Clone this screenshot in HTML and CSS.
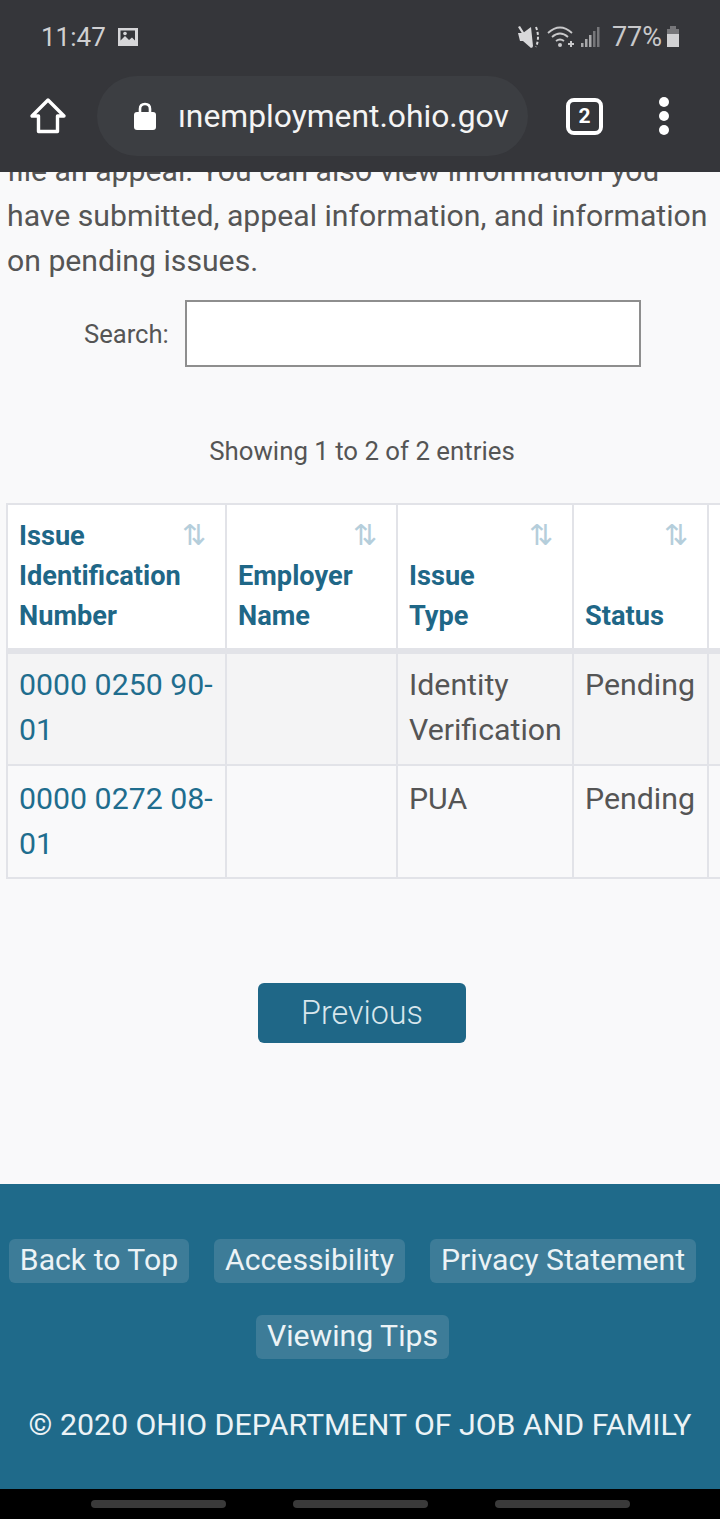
FILE: index.html
```html
<!DOCTYPE html>
<html lang="en">
<head>
    <meta charset="UTF-8">
    <title>Issues</title>
    <link rel="stylesheet" href="styles.css">
</head>
<body>
    <div class="chrome">
        <div class="status">
            <div class="status-left">
                <span class="time">11:47</span>
                <svg width="22" height="20" viewBox="0 0 22 20"><path fill="#d6d6d8" fill-rule="evenodd" d="M1 1h20v18H1zM3.500 3.500v10l4.500-4.500 4 4 3-2.500 3 3V3.500z"/><circle cx="8" cy="6.500" r="1.800" fill="#d6d6d8"/></svg>
            </div>
            <div class="status-right">
                <svg width="24" height="24" viewBox="0 0 24 24"><path fill="#d8d8da" d="M1 8h5l8-6 2 19-2 2-8-7H3zM1 2l2-1 13 21-2 1z"/><path fill="none" stroke="#d8d8da" stroke-width="2" stroke-dasharray="3 2" d="M19 2q4 10 0 20"/></svg>
                <svg class="wifi" width="30" height="26" viewBox="0 0 30 26"><g fill="none" stroke="#c8c8ca" stroke-width="1.800"><path d="M1 9q12-11 24 0"/><path d="M5 13q8-7 16 0"/><path d="M9 17q4-3 8 0"/></g><circle cx="13" cy="21" r="2" fill="#c8c8ca"/><path fill="#c8c8ca" d="M21 19h2v-2l2 0v2h2v2h-2v2h-2v-2h-2z"/></svg>
                <svg class="signal" width="20" height="22" viewBox="0 0 20 22"><path fill="#a8a8aa" d="M1 17h2.500v4H1zM5 13h2.500v8H5zM9 9h2.500v12H9z"/><path fill="#77777a" d="M13 5h2.500v16H13zM17 1h2.500v20H17z"/></svg>
                <span class="battery-text">77%</span>
                <svg width="16" height="24" viewBox="0 0 16 24"><path fill="#77777a" d="M5 1h6v3h3v6H2V4h3z"/><path fill="#d2d2d4" d="M2 9h12v13H2z"/></svg>
            </div>
        </div>
        <div class="toolbar">
            <svg class="home" width="38" height="38" viewBox="0 0 38 38"><path fill="none" stroke="#fff" stroke-width="3.400" stroke-linejoin="round" d="M19 3 3 19h6.500v15.500h19V19H35z"/></svg>
            <div class="omnibox">
                <svg width="24" height="30" viewBox="0 0 24 30"><path fill="none" stroke="#fff" stroke-width="2.600" d="M7 13V8q0-5 5-5t5 5v5"/><rect x="1" y="11" width="22" height="18" rx="3" fill="#fff"/></svg>
                <span class="url">ınemployment.ohio.gov</span>
            </div>
            <div class="tabs">2</div>
            <div class="dots"><i></i><i></i><i></i></div>
        </div>
    </div>

    <div class="main">
        <p class="intro">file an appeal. You can also view information you have submitted, appeal information, and information on pending issues.</p>
        <div class="search">
            <label for="q">Search:</label>
            <input id="q" type="text">
        </div>
        <div class="info">Showing 1 to 2 of 2 entries</div>
        <div class="table-wrap">
            <table>
                <thead>
                    <tr>
                        <th class="c1">Issue Identification Number<span class="sort">⇅</span></th>
                        <th class="c2">Employer Name<span class="sort">⇅</span></th>
                        <th class="c3">Issue<br>Type<span class="sort">⇅</span></th>
                        <th class="c4">Status<span class="sort">⇅</span></th>
                        <th class="c5"></th>
                    </tr>
                </thead>
                <tbody>
                    <tr class="odd">
                        <td><a href="#">0000 0250 90-01</a></td>
                        <td></td>
                        <td>Identity Verification</td>
                        <td>Pending</td>
                        <td></td>
                    </tr>
                    <tr class="even">
                        <td><a href="#">0000 0272 08-01</a></td>
                        <td></td>
                        <td>PUA</td>
                        <td>Pending</td>
                        <td></td>
                    </tr>
                </tbody>
            </table>
        </div>
        <div class="actions">
            <a class="btn" href="#">Previous</a>
        </div>
    </div>

    <div class="footer">
        <div class="footer-links">
            <a href="#">Back to Top</a>
            <a href="#">Accessibility</a>
            <a href="#">Privacy Statement</a>
            <a href="#">Viewing Tips</a>
        </div>
        <div class="copy">© 2020 OHIO DEPARTMENT OF JOB AND FAMILY</div>
    </div>

    <div class="navbar"><i></i><i></i><i></i></div>
</body>
</html>
```

FILE: styles.css
```css
* {
    padding: 0;
    margin: 0;
    box-sizing: border-box;
}
body {
    width: 720px;
    height: 1519px;
    overflow: hidden;
    display: flex;
    flex-direction: column;
    background-color: #f9f9fa;
    font-family: Roboto, sans-serif;
    color: #555;
}
.chrome {
    height: 172px;
    flex: none;
    background-color: #35363a;
    position: relative;
    z-index: 2;
}
.status {
    height: 76px;
    padding: 20px 39px 0 41px;
    display: flex;
    justify-content: space-between;
    align-items: flex-start;
}
.status-left {
    display: flex;
    align-items: center;
    gap: 11px;
}
.time {
    font-size: 26px;
    line-height: 34px;
    color: #d0d0d2;
}
.status-right {
    display: flex;
    align-items: center;
    height: 34px;
    gap: 3px;
}
.wifi {
    margin-left: 3px;
}
.battery-text {
    font-size: 27px;
    color: #c8c8ca;
    margin-left: 9px;
}
.toolbar {
    height: 80px;
    display: flex;
    align-items: center;
    padding-left: 29px;
}
.home {
    flex: none;
}
.omnibox {
    width: 431px;
    height: 80px;
    margin-left: 30px;
    border-radius: 40px;
    background-color: #3c3e42;
    display: flex;
    align-items: center;
    padding-left: 36px;
}
.url {
    font-size: 31.800px;
    color: #f4f4f4;
    margin-left: 21px;
    white-space: nowrap;
}
.tabs {
    width: 37px;
    height: 37px;
    margin-left: 38px;
    border: 4px solid #fff;
    border-radius: 8px;
    color: #fff;
    font-size: 21px;
    font-weight: 700;
    line-height: 29px;
    text-align: center;
}
.dots {
    margin-left: 56px;
    display: flex;
    flex-direction: column;
    gap: 4px;
}
.dots i {
    width: 10px;
    height: 10px;
    border-radius: 50%;
    background-color: #fff;
}
.main {
    flex: 1;
    overflow: hidden;
}
.intro {
    margin-top: -24px;
    padding: 0 7px;
    font-size: 30.200px;
    line-height: 45px;
    color: #555;
}
.search {
    margin-top: 17px;
    padding-left: 84px;
    display: flex;
    align-items: center;
    gap: 16px;
}
.search label {
    font-size: 25.600px;
    color: #555;
}
.search input {
    width: 456px;
    height: 67px;
    border: 2px solid #8e8e8e;
    background-color: #fff;
}
.info {
    margin-top: 66px;
    padding-left: 4px;
    text-align: center;
    font-size: 25.800px;
    line-height: 36px;
}
.table-wrap {
    margin-top: 34px;
    padding-left: 6px;
    overflow: hidden;
}
table {
    width: 760px;
    table-layout: fixed;
    border-collapse: collapse;
}
th, td {
    border: 2px solid #e2e3e8;
    padding: 0 11px;
    text-align: left;
    vertical-align: top;
}
th {
    position: relative;
    height: 147px;
    vertical-align: bottom;
    padding-bottom: 12px;
    background-color: #fff;
    border-bottom-width: 6px;
    color: #1f6787;
    font-size: 27.200px;
    line-height: 40px;
    font-weight: 700;
}
td {
    height: 113px;
    padding-top: 8px;
    font-size: 30.300px;
    line-height: 45px;
}
.odd td {
    height: 114px;
    background-color: #f4f4f5;
}
.even td {
    padding-top: 10px;
}
td a {
    color: #1f6d8e;
    text-decoration: none;
}
.c1 { width: 219px; }
.c2 { width: 171px; }
.c3 { width: 176px; }
.c4 { width: 135px; }
.sort {
    position: absolute;
    top: 10px;
    right: 19px;
    font-size: 29px;
    line-height: 40px;
    font-weight: 400;
    color: #b5cedb;
}
.actions {
    margin-top: 104px;
    display: flex;
    justify-content: center;
    padding-left: 4px;
}
.btn {
    width: 208px;
    height: 60px;
    border-radius: 6px;
    background-color: #1f6787;
    color: #d8e6ec;
    font-size: 32.300px;
    font-weight: 300;
    line-height: 60px;
    text-align: center;
    text-decoration: none;
}
.footer {
    height: 305px;
    flex: none;
    background-color: #1f6a8a;
    padding-top: 55px;
}
.footer-links {
    display: flex;
    flex-wrap: wrap;
    justify-content: center;
    gap: 32px 25px;
    padding-right: 15px;
}
.footer-links a {
    height: 44px;
    padding: 0 11px;
    border-radius: 6px;
    background-color: #3d7c98;
    color: #ecf3f6;
    font-size: 30.200px;
    line-height: 42px;
    text-decoration: none;
    white-space: nowrap;
}
.copy {
    margin-top: 46px;
    text-align: center;
    font-size: 30.300px;
    line-height: 40px;
    color: #ecf3f6;
    white-space: nowrap;
}
.navbar {
    height: 30px;
    flex: none;
    background-color: #000;
    display: flex;
    justify-content: center;
    gap: 67px;
    padding-top: 11px;
}
.navbar i {
    width: 135px;
    height: 8px;
    border-radius: 4px;
    background-color: #3a3a3a;
}
```
